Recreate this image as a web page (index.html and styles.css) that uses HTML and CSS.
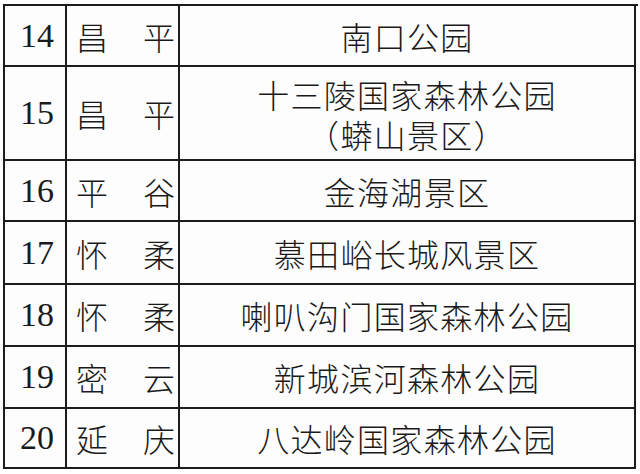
FILE: index.html
```html
<!DOCTYPE html>
<html lang="zh-CN">
<head>
<meta charset="utf-8">
<title>景区列表</title>
<link rel="stylesheet" href="styles.css">
</head>
<body>
<div class="grid">
  <div class="cell num r1">14</div><div class="cell dist r1"><span>昌</span><span>平</span></div><div class="cell place r1">南口公园</div>
  <div class="cell num r2">15</div><div class="cell dist r2"><span>昌</span><span>平</span></div><div class="cell place r2 two"><span class="ln">十三陵国家森林公园</span><span class="ln">（蟒山景区）</span></div>
  <div class="cell num r3">16</div><div class="cell dist r3"><span>平</span><span>谷</span></div><div class="cell place r3">金海湖景区</div>
  <div class="cell num r4">17</div><div class="cell dist r4"><span>怀</span><span>柔</span></div><div class="cell place r4">慕田峪长城风景区</div>
  <div class="cell num r5">18</div><div class="cell dist r5"><span>怀</span><span>柔</span></div><div class="cell place r5">喇叭沟门国家森林公园</div>
  <div class="cell num r6">19</div><div class="cell dist r6"><span>密</span><span>云</span></div><div class="cell place r6">新城滨河森林公园</div>
  <div class="cell num r7">20</div><div class="cell dist r7"><span>延</span><span>庆</span></div><div class="cell place r7">八达岭国家森林公园</div>
</div>
</body>
</html>
```

FILE: styles.css
```css
html, body {
  margin: 0;
  padding: 0;
  background: #ffffff;
}
body {
  padding: 4px 0 0 3px;
}
.grid {
  display: grid;
  grid-template-columns: 62px 113px 456px;
  grid-template-rows: 61px 94px 61px 63px 62px 62px 60px;
  width: 633px;
  border-top: 2px solid #1c1c1c;
  border-left: 2px solid #1c1c1c;
  background: #fdfdfd;
  color: #1a1a1a;
}
.cell {
  box-sizing: border-box;
  border-right: 2px solid #1c1c1c;
  border-bottom: 2px solid #1c1c1c;
  display: flex;
  align-items: center;
}
.num {
  justify-content: center;
  padding-left: 4px;
  font-family: "Liberation Serif", "Times New Roman", serif;
  font-size: 34px;
}
.dist {
  justify-content: space-between;
  padding: 0 3px 0 9px;
  font-family: "Noto Sans CJK SC", sans-serif;
  font-size: 32px;
  font-weight: 300;
}
.place {
  justify-content: center;
  font-family: "Noto Sans CJK SC", sans-serif;
  font-size: 32px;
  font-weight: 300;
  letter-spacing: 1.3px;
}
.place.two {
  flex-direction: column;
  padding-top: 2px;
}
.ln {
  display: block;
  line-height: 40px;
}
```
